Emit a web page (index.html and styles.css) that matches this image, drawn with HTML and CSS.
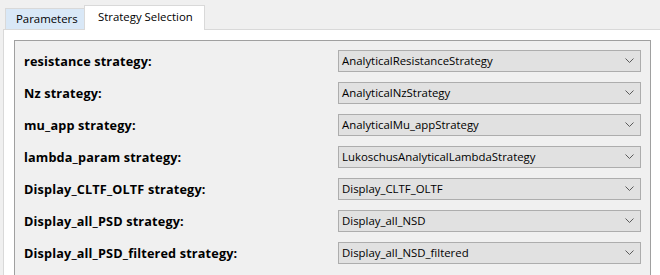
FILE: index.html
```html
<!DOCTYPE html>
<html lang="en">
<head>
  <meta charset="UTF-8" />
  <title>Strategy Selection</title>
  <link rel="stylesheet" href="styles.css">
</head>
<body>
  <div class="tab-strip">
    <div class="tab">Parameters</div>
    <div class="tab active">Strategy Selection</div>
  </div>

  <div class="tab-panel">
    <div class="group-box">
      <div class="strategy-grid">
        <label>resistance strategy:</label>
        <div class="combo"><span>AnalyticalResistanceStrategy</span><svg viewBox="0 0 9 5"><path d="M0.5 0.5 L4.5 4.5 L8.5 0.5"/></svg></div>

        <label>Nz strategy:</label>
        <div class="combo"><span>AnalyticalNzStrategy</span><svg viewBox="0 0 9 5"><path d="M0.5 0.5 L4.5 4.5 L8.5 0.5"/></svg></div>

        <label>mu_app strategy:</label>
        <div class="combo"><span>AnalyticalMu_appStrategy</span><svg viewBox="0 0 9 5"><path d="M0.5 0.5 L4.5 4.5 L8.5 0.5"/></svg></div>

        <label>lambda_param strategy:</label>
        <div class="combo"><span>LukoschusAnalyticalLambdaStrategy</span><svg viewBox="0 0 9 5"><path d="M0.5 0.5 L4.5 4.5 L8.5 0.5"/></svg></div>

        <label>Display_CLTF_OLTF strategy:</label>
        <div class="combo"><span>Display_CLTF_OLTF</span><svg viewBox="0 0 9 5"><path d="M0.5 0.5 L4.5 4.5 L8.5 0.5"/></svg></div>

        <label>Display_all_PSD strategy:</label>
        <div class="combo"><span>Display_all_NSD</span><svg viewBox="0 0 9 5"><path d="M0.5 0.5 L4.5 4.5 L8.5 0.5"/></svg></div>

        <label>Display_all_PSD_filtered strategy:</label>
        <div class="combo"><span>Display_all_NSD_filtered</span><svg viewBox="0 0 9 5"><path d="M0.5 0.5 L4.5 4.5 L8.5 0.5"/></svg></div>
      </div>
    </div>
  </div>
</body>
</html>
```

FILE: styles.css
```css
* {
  margin: 0;
  padding: 0;
  box-sizing: border-box;
}

:root {
  --fundo: #f0f0f0;
  --borda-aba: #d9d9d9;
  --borda-grupo: #a0a0a0;
  --borda-combo: #adadad;
  --combo-bg: #e1e1e1;
  --aba-azul: #d9e8f7;
  --texto: #000000;
}

body {
  font-family: "Open Sans", "Noto Sans", sans-serif;
  font-size: 11.4px;
  color: var(--texto);
  background-color: var(--fundo);
  overflow: hidden;
}

.tab-strip {
  display: flex;
  align-items: flex-end;
  height: 29px;
  padding-left: 5px;
}

.tab {
  height: 21px;
  width: 79px;
  padding: 0 10px;
  line-height: 19px;
  white-space: nowrap;
  background-color: var(--aba-azul);
  border: 1px solid var(--borda-aba);
  border-right: none;
  border-bottom: none;
}

.tab.active {
  position: relative;
  height: 25px;
  width: 121px;
  padding: 0 13px;
  line-height: 22px;
  background-color: #ffffff;
  border-right: 1px solid var(--borda-aba);
  margin-bottom: -1px;
}

.tab-panel {
  margin-left: 3px;
  height: 246px;
  background-color: #ffffff;
  border-top: 1px solid var(--borda-aba);
  border-left: 1px solid var(--borda-aba);
  padding: 10px 9px 0 10px;
}

.group-box {
  height: 100%;
  border: 1px solid var(--borda-grupo);
  border-bottom: none;
  background-color: var(--fundo);
  padding: 9px 9px 0 9px;
}

.strategy-grid {
  display: grid;
  grid-template-columns: 314px 303px;
  grid-auto-rows: 22px;
  row-gap: 10px;
  align-items: center;
}

.strategy-grid label {
  font-size: 12.7px;
  font-weight: 700;
  letter-spacing: 0.15px;
  white-space: nowrap;
}

.combo {
  height: 22px;
  display: flex;
  align-items: center;
  justify-content: space-between;
  padding: 0 6px 1px 3px;
  border: 1px solid var(--borda-combo);
  background-color: var(--combo-bg);
  white-space: nowrap;
}

.combo svg {
  width: 9px;
  height: 5px;
  fill: none;
  stroke: #5a5a5a;
  stroke-width: 1;
}
```
